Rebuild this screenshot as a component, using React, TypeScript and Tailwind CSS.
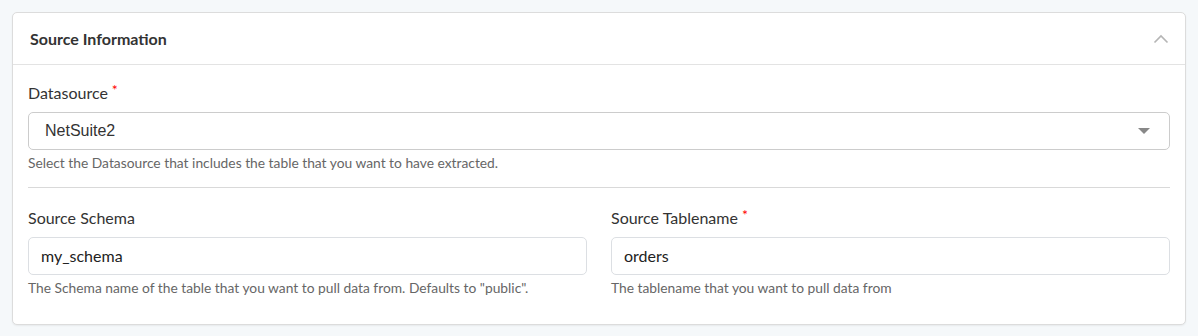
const Label = ({ text, required }: { text: string; required?: boolean }) => (
  <div className="text-[16px] leading-[20px] text-[#333]">
    {text}
    {required && <span className="text-[#f00] text-[14px] leading-[14px] align-top ml-[4px]">*</span>}
  </div>
);

const Help = ({ text }: { text: string }) => (
  <p className="mt-[5px] text-[13.8px] leading-[16px] text-[#666]">{text}</p>
);

const TextField = ({ label, value, help, required }: { label: string; value: string; help: string; required?: boolean }) => (
  <div className="flex flex-col">
    <Label text={label} required={required} />
    <div className="mt-[9px] h-[38px] rounded-[5px] border border-[#dcdfe3] bg-white px-[12px] flex items-center text-[16px] text-[#222]">
      {value}
    </div>
    <Help text={help} />
  </div>
);

export default function App() {
  return (
    <div className="min-h-[336px] bg-[#f5f8fa] p-[12px] font-['Lato',sans-serif]">
      <div className="rounded-[5px] border border-[#dcdcdc] bg-white shadow-[0_1px_2px_rgba(0,0,0,0.06)]">
        <div className="h-[52px] flex items-center justify-between px-[17px] border-b border-[#e3e3e3]">
          <h2 className="text-[16px] font-bold text-[#333]">Source Information</h2>
          <svg width="16" height="10" viewBox="0 0 16 10" className="mr-[-1px]">
            <path d="M1.5 8.5 L8 2 L14.5 8.5" fill="none" stroke="#b5b5b5" strokeWidth="1.6" />
          </svg>
        </div>
        <div className="px-[15px] pt-[18px] pb-[28px]">
          <Label text="Datasource" required />
          <div className="mt-[9px] h-[38px] rounded-[5px] border border-[#cccccc] bg-white pl-[16px] pr-[16px] flex items-center justify-between">
            <span className="font-['Liberation_Sans',sans-serif] text-[16px] text-[#333]">NetSuite2</span>
            <svg width="12" height="7" viewBox="0 0 12 7" className="mr-[3px]">
              <path d="M0 0 L12 0 L6 6 Z" fill="#888" />
            </svg>
          </div>
          <Help text="Select the Datasource that includes the table that you want to have extracted." />
          <div className="mt-[16px] mb-[20px] border-t border-[#d9d9d9]" />
          <div className="grid grid-cols-2 gap-[24px]">
            <TextField
              label="Source Schema"
              value="my_schema"
              help={'The Schema name of the table that you want to pull data from. Defaults to "public".'}
            />
            <TextField
              label="Source Tablename"
              value="orders"
              help="The tablename that you want to pull data from"
              required
            />
          </div>
        </div>
      </div>
    </div>
  );
}
